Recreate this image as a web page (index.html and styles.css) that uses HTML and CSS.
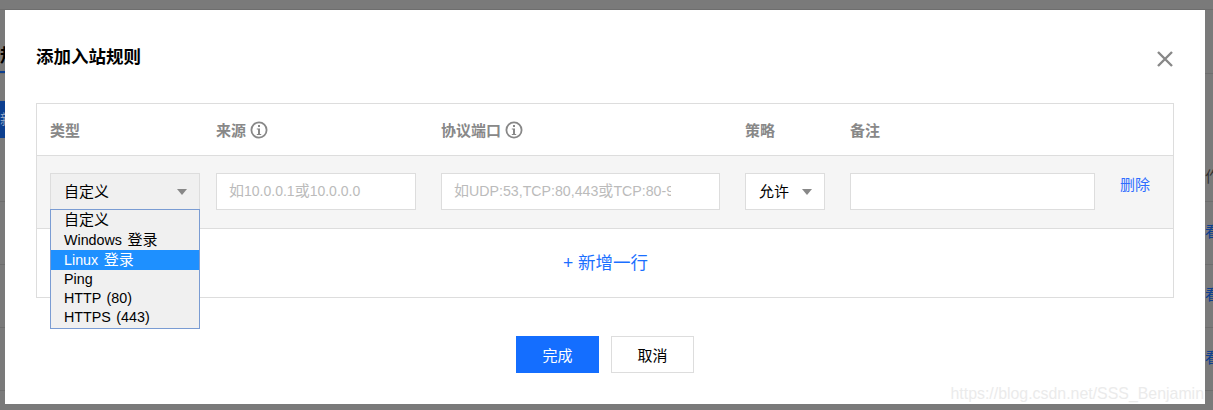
FILE: index.html
```html
<!DOCTYPE html>
<html lang="zh">
<head>
<meta charset="utf-8">
<title>添加入站规则</title>
<link rel="stylesheet" href="styles.css">
</head>
<body>
<div class="backdrop">
  <i class="bg-line l0"></i>
  <i class="bg-line l1"></i><i class="bg-line l2"></i><i class="bg-line l3"></i><i class="bg-line l4"></i><i class="bg-line l5"></i>
  <span class="bg-tab">规</span><i class="bg-underline"></i><span class="bg-btn">新</span>
  <span class="bg-op">作</span>
  <span class="bg-link k1">看</span><span class="bg-link k2">看</span><span class="bg-link k3">看</span>
</div>
<main class="dialog">
  <header class="dialog-head">
    <h1 class="dialog-title">添加入站规则</h1>
    <svg class="close" width="16" height="16" viewBox="0 0 16 16"><path d="M1 1L15 15M15 1L1 15" stroke="#888" stroke-width="2.4" fill="none"/></svg>
  </header>
  <section class="rules">
    <div class="cols head-row">
      <div class="c-type">类型</div>
      <div class="c-src">来源<svg class="info" width="18" height="18" viewBox="0 0 18 18"><circle cx="9" cy="9" r="7.6" fill="none" stroke="#888" stroke-width="1.8"/><rect x="8" y="4" width="2" height="2" fill="#888"/><path d="M6.8 7.6H10V13H11.2V14H6.8V13H8V8.6H6.8Z" fill="#888"/></svg></div>
      <div class="c-port">协议端口<svg class="info" width="18" height="18" viewBox="0 0 18 18"><circle cx="9" cy="9" r="7.6" fill="none" stroke="#888" stroke-width="1.8"/><rect x="8" y="4" width="2" height="2" fill="#888"/><path d="M6.8 7.6H10V13H11.2V14H6.8V13H8V8.6H6.8Z" fill="#888"/></svg></div>
      <div class="c-policy">策略</div>
      <div class="c-note">备注</div>
    </div>
    <div class="cols body-row">
      <div class="c-type">
        <div class="select select-type"><span>自定义</span><i class="caret"></i></div>
        <ul class="listbox">
          <li><span class="zh">自定义</span></li>
          <li>Windows <span class="zh">登录</span></li>
          <li class="active">Linux <span class="zh">登录</span></li>
          <li>Ping</li>
          <li>HTTP (80)</li>
          <li>HTTPS (443)</li>
        </ul>
      </div>
      <div class="c-src"><div class="field"><span class="zh">如</span>10.0.0.1<span class="zh">或</span>10.0.0.0</div></div>
      <div class="c-port"><div class="field clip"><span class="clip-text"><span class="zh">如</span>UDP:53,TCP:80,443<span class="zh">或</span>TCP:80-9</span></div></div>
      <div class="c-policy"><div class="select select-policy"><span>允许</span><i class="caret"></i></div></div>
      <div class="c-note"><div class="field note"></div></div>
      <a class="del">删除</a>
    </div>
    <div class="add-row">+ 新增一行</div>
  </section>
  <footer class="actions">
    <button class="btn primary">完成</button>
    <button class="btn">取消</button>
  </footer>
  <div class="watermark">https://blog.csdn.net/SSS_Benjamin</div>
</main>
</body>
</html>
```
FILE: styles.css
```css
* { box-sizing: border-box; }
html, body { margin: 0; height: 410px; overflow: hidden; }
body {
  position: relative;
  width: 1213px;
  background: #7a7a7a;
  font-family: "Liberation Sans", "Noto Sans CJK SC", sans-serif;
  color: #000;
}
.backdrop { position: absolute; inset: 0; overflow: hidden; }
.bg-line { position: absolute; left: 0; width: 1213px; height: 1px; background: #6e6e6e; }
.l0 { top: 9px; }
.l1 { top: 73px; }
.l2 { top: 201px; }
.l3 { top: 264px; }
.l4 { top: 327px; }
.l5 { top: 390px; }
.bg-tab { position: absolute; left: 0; top: 44px; font-size: 18px; line-height: 24px; font-weight: 700; color: #000; }
.bg-underline { position: absolute; left: 0; top: 71px; width: 5px; height: 2px; background: #0d3f8f; }
.bg-btn { position: absolute; left: 0; top: 101px; width: 5px; height: 37px; background: #0d3f8f; color: #8fa3c4; font-size: 14px; line-height: 37px; white-space: nowrap; overflow: hidden; }
.bg-op { position: absolute; left: 1205px; top: 167px; font-size: 15px; line-height: 20px; color: #333; }
.bg-link { position: absolute; left: 1205px; font-size: 15px; line-height: 20px; color: #0d3f8f; }
.k1 { top: 222px; } .k2 { top: 285px; } .k3 { top: 348px; }
.dialog {
  position: absolute;
  left: 5px; top: 10px;
  width: 1200px; height: 394px;
  background: #fff;
  padding: 0 31px;
}
.dialog-head { display: flex; align-items: center; justify-content: space-between; height: 93px; padding-right: 1px; }
.dialog-title { margin: 0; font-size: 17.5px; font-weight: 700; line-height: 24px; }
.close { display: block; position: relative; top: 2px; }
.rules { width: 1138px; height: 195px; border: 1px solid #ddd; }
.cols { display: flex; padding-left: 13px; }
.head-row { height: 52px; align-items: center; font-size: 15px; font-weight: 700; color: #888; border-bottom: 1px solid #ddd; }
.head-row > div { display: flex; align-items: center; gap: 4px; }
.c-type { width: 166px; position: relative; }
.c-src { width: 225px; }
.c-port { width: 304px; }
.c-policy { width: 105px; }
.c-note { width: 245px; }
.body-row { position: relative; height: 73px; background: #f5f5f5; border-bottom: 1px solid #ddd; padding-top: 17px; font-size: 15px; }
.select { display: flex; align-items: center; justify-content: space-between; height: 37px; border: 1px solid #ddd; line-height: 33px; padding-bottom: 1px; }
.select-type { width: 150px; padding-left: 13px; padding-right: 12px; background: #f0f0f0; }
.select-policy { width: 80px; padding-left: 13px; padding-right: 12px; background: #fff; }
.caret { width: 0; height: 0; margin-top: 1px; border-left: 5px solid transparent; border-right: 5px solid transparent; border-top: 6px solid #888; }
.zh { font-size: 15px; }
.field { height: 37px; width: 200px; border: 1px solid #ddd; background: #fff; padding: 0 12px; font-size: 14px; line-height: 34px; color: #bbb; white-space: nowrap; }
.clip { width: 279px; font-size: 14.2px; }
.clip-text { display: block; width: 217px; overflow: hidden; }
.note { width: 245px; }
.del { color: #2f6dff; font-size: 15px; margin-left: 25px; line-height: 23px; }
.listbox {
  position: absolute; left: 0; top: 36px; z-index: 2;
  width: 150px; height: 120px; margin: 0; padding: 0; list-style: none;
  border: 1px solid #7a9cd3; background: #f0f0f0;
  font-size: 14.3px; word-spacing: 1.5px;
}
.listbox li { padding-left: 13px; height: 20px; line-height: 18px; white-space: nowrap; overflow: hidden; }
.listbox li:nth-child(-n+3) { line-height: 20px; }
.listbox li:nth-child(n+5) { height: 19px; line-height: 16px; }
.listbox li.active { background: #1e90ff; color: #fff; }
.add-row { height: 68px; display: flex; align-items: center; justify-content: center; font-size: 17.5px; line-height: 24px; color: #1a6fff; padding: 0 0 0 1px; }
.actions { display: flex; justify-content: center; gap: 12px; margin-top: 38px; }
.btn { width: 83px; height: 37px; border: 1px solid #ddd; background: #fff; font: 15px "Liberation Sans", "Noto Sans CJK SC", sans-serif; color: #000; padding: 0; }
.btn.primary { background: #146eff; border-color: #146eff; color: #fff; }
.watermark { position: absolute; right: 1px; bottom: 1px; font-size: 15.9px; color: #ebebeb; }
```
